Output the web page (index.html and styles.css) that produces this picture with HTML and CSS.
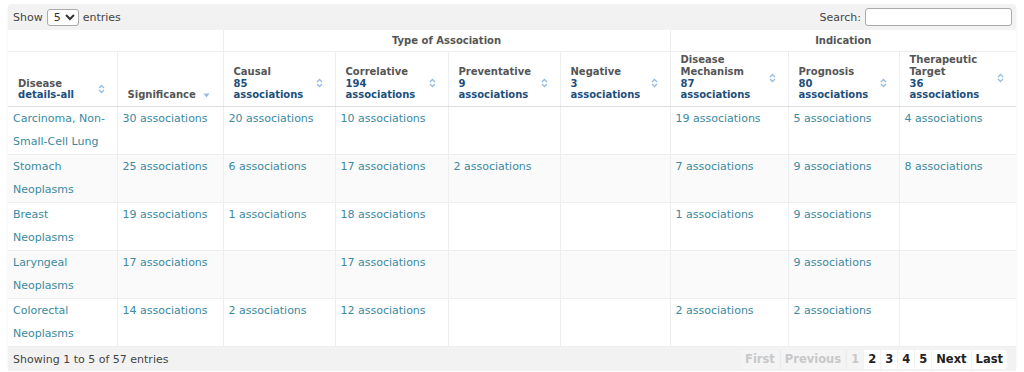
FILE: index.html
```html
<!DOCTYPE html>
<html>
<head>
<meta charset="utf-8">
<link rel="stylesheet" href="styles.css">
</head>
<body>
<div class="wrap">
  <div class="toolbar">
    <label class="length">Show <select class="sel"><option>5</option><option>10</option></select> entries</label>
    <label class="search">Search: <input type="text" class="search-input"></label>
  </div>
  <table class="grid">
    <colgroup>
      <col class="w109"><col class="w106"><col class="w112"><col class="w113"><col class="w112"><col class="w110"><col class="w118"><col class="w111"><col class="w117">
    </colgroup>
    <thead>
      <tr class="group">
        <th colspan="2"></th>
        <th colspan="4">Type of Association</th>
        <th colspan="3">Indication</th>
      </tr>
      <tr class="cols">
        <th><div class="hd"><div class="hd-text">Disease<span class="sub">details-all</span></div><svg class="sort" viewBox="0 0 7 10"><path d="M1 4 L3.5 1.5 L6 4 M1 6 L3.5 8.5 L6 6"/></svg></div></th>
        <th><div class="hd"><div class="hd-text">Significance</div><svg class="sorted" viewBox="0 0 7 5"><path d="M0.5 0.5 L6.5 0.5 L3.5 4.5 Z"/></svg></div></th>
        <th><div class="hd"><div class="hd-text">Causal<span class="sub">85<br>associations</span></div><svg class="sort" viewBox="0 0 7 10"><path d="M1 4 L3.5 1.5 L6 4 M1 6 L3.5 8.5 L6 6"/></svg></div></th>
        <th><div class="hd"><div class="hd-text">Correlative<span class="sub">194<br>associations</span></div><svg class="sort" viewBox="0 0 7 10"><path d="M1 4 L3.5 1.5 L6 4 M1 6 L3.5 8.5 L6 6"/></svg></div></th>
        <th><div class="hd"><div class="hd-text">Preventative<span class="sub">9<br>associations</span></div><svg class="sort" viewBox="0 0 7 10"><path d="M1 4 L3.5 1.5 L6 4 M1 6 L3.5 8.5 L6 6"/></svg></div></th>
        <th><div class="hd"><div class="hd-text">Negative<span class="sub">3<br>associations</span></div><svg class="sort" viewBox="0 0 7 10"><path d="M1 4 L3.5 1.5 L6 4 M1 6 L3.5 8.5 L6 6"/></svg></div></th>
        <th><div class="hd"><div class="hd-text">Disease<br>Mechanism<span class="sub">87<br>associations</span></div><svg class="sort" viewBox="0 0 7 10"><path d="M1 4 L3.5 1.5 L6 4 M1 6 L3.5 8.5 L6 6"/></svg></div></th>
        <th><div class="hd"><div class="hd-text">Prognosis<span class="sub">80<br>associations</span></div><svg class="sort" viewBox="0 0 7 10"><path d="M1 4 L3.5 1.5 L6 4 M1 6 L3.5 8.5 L6 6"/></svg></div></th>
        <th><div class="hd"><div class="hd-text">Therapeutic<br>Target<span class="sub">36<br>associations</span></div><svg class="sort" viewBox="0 0 7 10"><path d="M1 4 L3.5 1.5 L6 4 M1 6 L3.5 8.5 L6 6"/></svg></div></th>
      </tr>
    </thead>
    <tbody>
      <tr>
        <td><a>Carcinoma, Non-Small-Cell Lung</a></td>
        <td><a>30 associations</a></td>
        <td><a>20 associations</a></td>
        <td><a>10 associations</a></td>
        <td></td>
        <td></td>
        <td><a>19 associations</a></td>
        <td><a>5 associations</a></td>
        <td><a>4 associations</a></td>
      </tr>
      <tr>
        <td><a>Stomach Neoplasms</a></td>
        <td><a>25 associations</a></td>
        <td><a>6 associations</a></td>
        <td><a>17 associations</a></td>
        <td><a>2 associations</a></td>
        <td></td>
        <td><a>7 associations</a></td>
        <td><a>9 associations</a></td>
        <td><a>8 associations</a></td>
      </tr>
      <tr>
        <td><a>Breast Neoplasms</a></td>
        <td><a>19 associations</a></td>
        <td><a>1 associations</a></td>
        <td><a>18 associations</a></td>
        <td></td>
        <td></td>
        <td><a>1 associations</a></td>
        <td><a>9 associations</a></td>
        <td></td>
      </tr>
      <tr>
        <td><a>Laryngeal Neoplasms</a></td>
        <td><a>17 associations</a></td>
        <td></td>
        <td><a>17 associations</a></td>
        <td></td>
        <td></td>
        <td></td>
        <td><a>9 associations</a></td>
        <td></td>
      </tr>
      <tr>
        <td><a>Colorectal Neoplasms</a></td>
        <td><a>14 associations</a></td>
        <td><a>2 associations</a></td>
        <td><a>12 associations</a></td>
        <td></td>
        <td></td>
        <td><a>2 associations</a></td>
        <td><a>2 associations</a></td>
        <td></td>
      </tr>
    </tbody>
  </table>
  <div class="footer">
    <div class="info">Showing 1 to 5 of 57 entries</div>
    <div class="pager">
      <span class="pg off">First</span><span class="pg off">Previous</span><span class="pg off cur">1</span><span class="pg">2</span><span class="pg">3</span><span class="pg">4</span><span class="pg">5</span><span class="pg">Next</span><span class="pg last">Last</span>
    </div>
  </div>
</div>
</body>
</html>
```
FILE: styles.css
```css
html, body {
  margin: 0;
  padding: 0;
  background: #ffffff;
}
body {
  padding: 4px 8px 0 8px;
  font-family: "DejaVu Sans", Verdana, sans-serif;
  font-size: 11px;
  color: #333;
}
.wrap {
  width: 1008px;
  background: #f2f2f2;
  border-radius: 4px;
  box-shadow: 0 1px 2px rgba(0,0,0,0.08);
}
.toolbar {
  height: 26px;
  display: flex;
  align-items: center;
  justify-content: space-between;
  padding: 0 4px 0 5px;
}
.length, .search {
  display: flex;
  align-items: center;
  gap: 4px;
  color: #444;
}
.sel {
  font-family: "DejaVu Sans", Verdana, sans-serif;
  font-size: 11px;
  height: 17px;
  width: 32px;
  padding: 0 0 0 2px;
  border: 1px solid #aaa;
  border-radius: 3px;
  background: #fff;
  color: #333;
}
.search-input {
  width: 141px;
  height: 16px;
  padding: 0 2px;
  border: 1px solid #aaa;
  border-radius: 3px;
  background: #fff;
}
.grid {
  width: 1008px;
  table-layout: fixed;
  border-collapse: collapse;
  background: #fff;
}
.w109 { width: 109px; }
.w106 { width: 106px; }
.w112 { width: 112px; }
.w113 { width: 113px; }
.w110 { width: 110px; }
.w118 { width: 118px; }
.w111 { width: 111px; }
.w117 { width: 117px; }
.grid th {
  font-size: 10px;
  font-weight: bold;
  color: #555;
  border: 1px solid #eee;
  border-top: none;
}
.grid th:first-child, .grid td:first-child { border-left: none; }
.grid th:last-child, .grid td:last-child { border-right: none; }
.group th {
  height: 21px;
  padding: 0;
  text-align: center;
}
.cols th {
  height: 49px;
  padding: 0 12px 5px 10px;
  vertical-align: bottom;
  text-align: left;
  border-bottom: 1px solid #ddd;
}
.hd {
  display: flex;
  align-items: center;
  justify-content: space-between;
}
.hd-text {
  line-height: 11.7px;
}
.sub {
  display: block;
  color: #1d4f7c;
}
.sort {
  width: 7px;
  height: 10px;
  flex: none;
  fill: none;
  stroke: #95bde0;
  stroke-width: 1.3;
}
.sorted {
  width: 7px;
  height: 5px;
  flex: none;
  fill: #95bde0;
  margin-right: 1px;
}
.grid td {
  padding: 0 6px 1px 5px;
  line-height: 23px;
  vertical-align: top;
  border: 1px solid #eee;
  border-bottom: none;
  color: #3a8aa0;
}
.grid tbody tr:nth-child(even) td {
  background: #fafafa;
}
.grid tbody tr:first-child td {
  border-top: none;
}
.grid a {
  color: #3a8aa0;
  text-decoration: none;
}
.footer {
  height: 24px;
  display: flex;
  align-items: center;
  justify-content: space-between;
  padding: 0 9px 0 5px;
  border-top: 1px solid #eee;
}
.info {
  color: #444;
}
.pager {
  display: flex;
  align-items: center;
}
.pg {
  font-size: 11.5px;
  font-weight: bold;
  color: #222;
  background: #fff;
  padding: 2px 4px;
  line-height: 15px;
  margin-left: 1px;
}
.pg.off {
  color: #c8c8c8;
  background: #f4f4f4;
  border-left: 1px solid #ebebeb;
}
.pg.off:first-child { border-left: none; }
.pg.last {
  border-radius: 0 3px 3px 0;
}
```
